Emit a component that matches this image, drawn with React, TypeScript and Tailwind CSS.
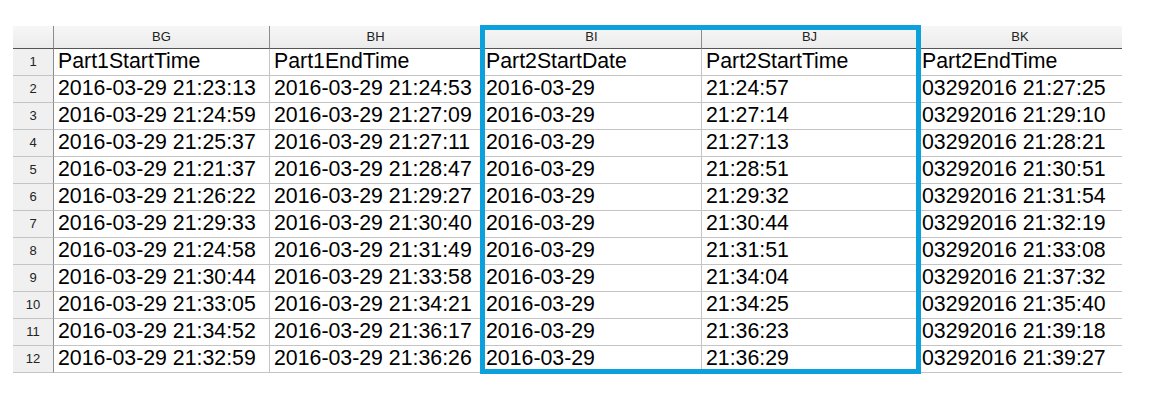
const cols = ['BG', 'BH', 'BI', 'BJ', 'BK'];

const rows: string[][] = [
  ['Part1StartTime', 'Part1EndTime', 'Part2StartDate', 'Part2StartTime', 'Part2EndTime'],
  ['2016-03-29 21:23:13', '2016-03-29 21:24:53', '2016-03-29', '21:24:57', '03292016 21:27:25'],
  ['2016-03-29 21:24:59', '2016-03-29 21:27:09', '2016-03-29', '21:27:14', '03292016 21:29:10'],
  ['2016-03-29 21:25:37', '2016-03-29 21:27:11', '2016-03-29', '21:27:13', '03292016 21:28:21'],
  ['2016-03-29 21:21:37', '2016-03-29 21:28:47', '2016-03-29', '21:28:51', '03292016 21:30:51'],
  ['2016-03-29 21:26:22', '2016-03-29 21:29:27', '2016-03-29', '21:29:32', '03292016 21:31:54'],
  ['2016-03-29 21:29:33', '2016-03-29 21:30:40', '2016-03-29', '21:30:44', '03292016 21:32:19'],
  ['2016-03-29 21:24:58', '2016-03-29 21:31:49', '2016-03-29', '21:31:51', '03292016 21:33:08'],
  ['2016-03-29 21:30:44', '2016-03-29 21:33:58', '2016-03-29', '21:34:04', '03292016 21:37:32'],
  ['2016-03-29 21:33:05', '2016-03-29 21:34:21', '2016-03-29', '21:34:25', '03292016 21:35:40'],
  ['2016-03-29 21:34:52', '2016-03-29 21:36:17', '2016-03-29', '21:36:23', '03292016 21:39:18'],
  ['2016-03-29 21:32:59', '2016-03-29 21:36:26', '2016-03-29', '21:36:29', '03292016 21:39:27'],
];

export default function App() {
  return (
    <div className="w-[1162px] h-[410px] bg-white pl-[13px] pt-[26px] font-['Liberation_Sans',Arial,sans-serif]">
      <div className="relative w-[1109px]">
        <div className="grid grid-cols-[41px_216px_212px_220px_216px_204px]">
          {/* header row */}
          <div className="h-[23px] bg-gradient-to-b from-[#f7f7f7] to-[#ebebeb] border-r border-b border-r-[#8c8c8c] border-b-[#555]" />
          {cols.map((c, i) => (
            <div
              key={c}
              className={`h-[23px] flex items-center justify-center text-[13px] text-[#222] bg-gradient-to-b from-[#f7f7f7] to-[#ebebeb] border-b border-b-[#555] ${i < cols.length - 1 ? 'border-r border-r-[#8c8c8c]' : ''}`}
            >
              {c}
            </div>
          ))}

          {rows.map((r, ri) => (
            <div key={ri} className="contents">
              <div className="h-[27px] flex items-center justify-center text-[13px] text-[#222] bg-[#f0f0f0] border-r border-b border-r-[#8c8c8c] border-b-[#c4c4c4]">
                {ri + 1}
              </div>
              {r.map((v, ci) => (
                <div
                  key={ci}
                  className={`h-[27px] pl-[4px] flex items-center text-[21.3px] leading-none text-black whitespace-nowrap overflow-hidden border-b border-b-[#c4c4c4] ${ci < r.length - 1 ? 'border-r border-r-[#c4c4c4]' : ''}`}
                >
                  {v}
                </div>
              ))}
            </div>
          ))}
        </div>

        {/* selection box over BI:BJ */}
        <div className="absolute left-[467px] top-[-1px] w-[441px] h-[349px] border-[5px] border-[#0ca0dd] pointer-events-none" />
      </div>
    </div>
  );
}
